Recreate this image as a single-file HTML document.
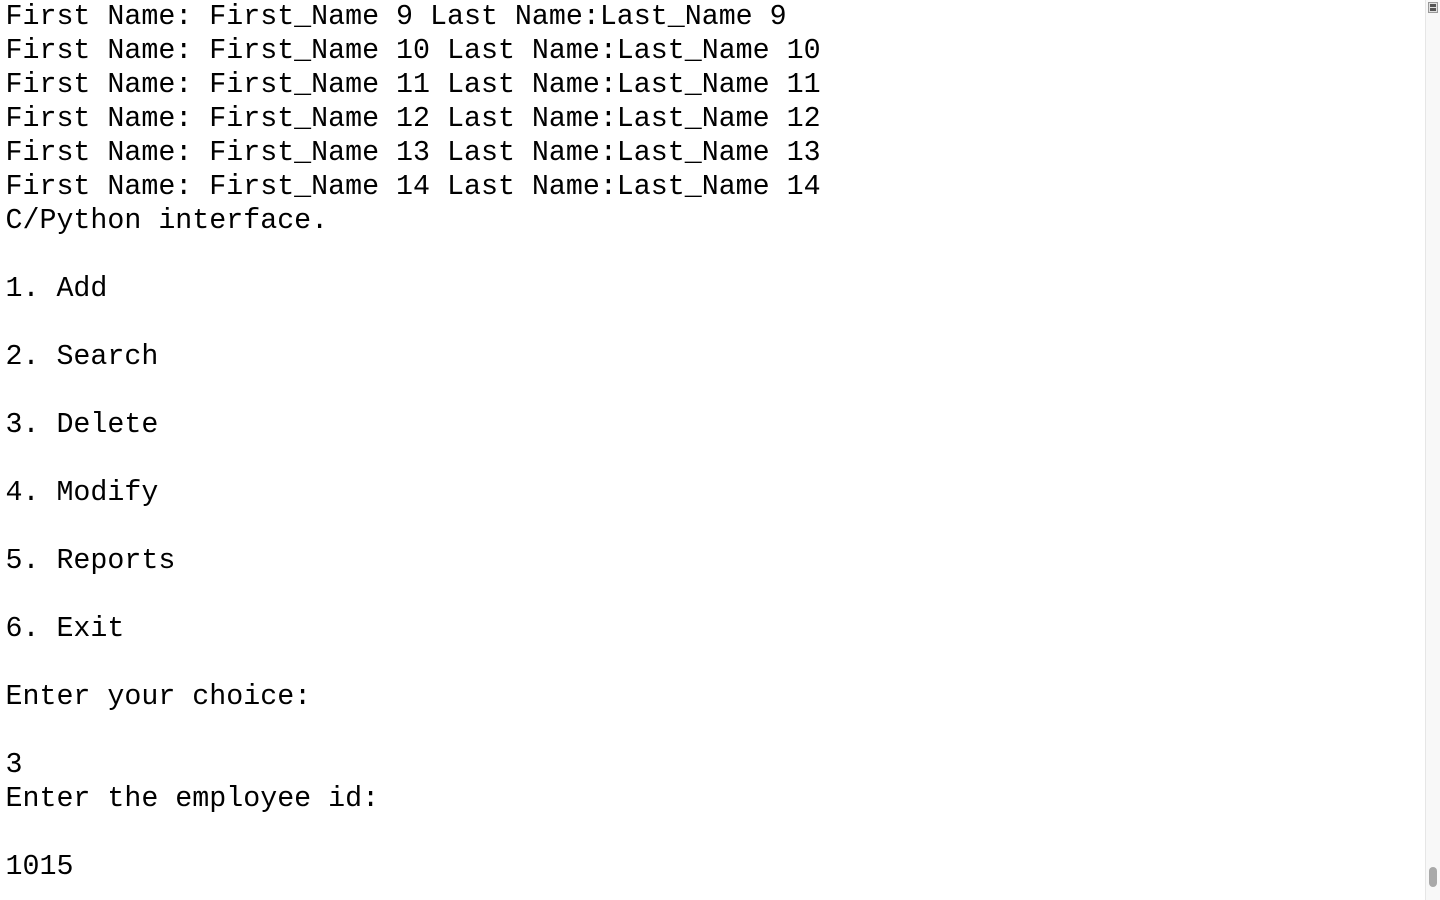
<!DOCTYPE html>
<html><head><style>
html,body{margin:0;padding:0;background:#fff;width:1440px;height:900px;overflow:hidden}
pre{margin:0;position:absolute;left:5.5px;top:0;font-family:"Liberation Mono",monospace;font-size:28.3px;line-height:34px;color:#000}
.sb{position:absolute;left:1425px;top:0;width:15px;height:900px;background:#f8f8f8;border-left:1px solid #e6e6e6;box-sizing:border-box}
.ic{position:absolute;left:1428px;top:2px;width:10px;height:11px;background:#e0e0e0;border:1px solid #999;box-sizing:border-box}
.ic i{position:absolute;left:1px;width:6px;height:3px;background:#555}
.th{position:absolute;left:1429px;top:867px;width:8px;height:20px;border-radius:4px;background:#a9a9a9}
</style></head><body>
<pre>First Name: First_Name 9 Last Name:Last_Name 9
First Name: First_Name 10 Last Name:Last_Name 10
First Name: First_Name 11 Last Name:Last_Name 11
First Name: First_Name 12 Last Name:Last_Name 12
First Name: First_Name 13 Last Name:Last_Name 13
First Name: First_Name 14 Last Name:Last_Name 14
C/Python interface.

1. Add

2. Search

3. Delete

4. Modify

5. Reports

6. Exit

Enter your choice:

3
Enter the employee id:

1015</pre>
<div class="sb"></div>
<div class="ic"><i style="top:1px"></i><i style="top:5px"></i></div>
<div class="th"></div>
</body></html>
